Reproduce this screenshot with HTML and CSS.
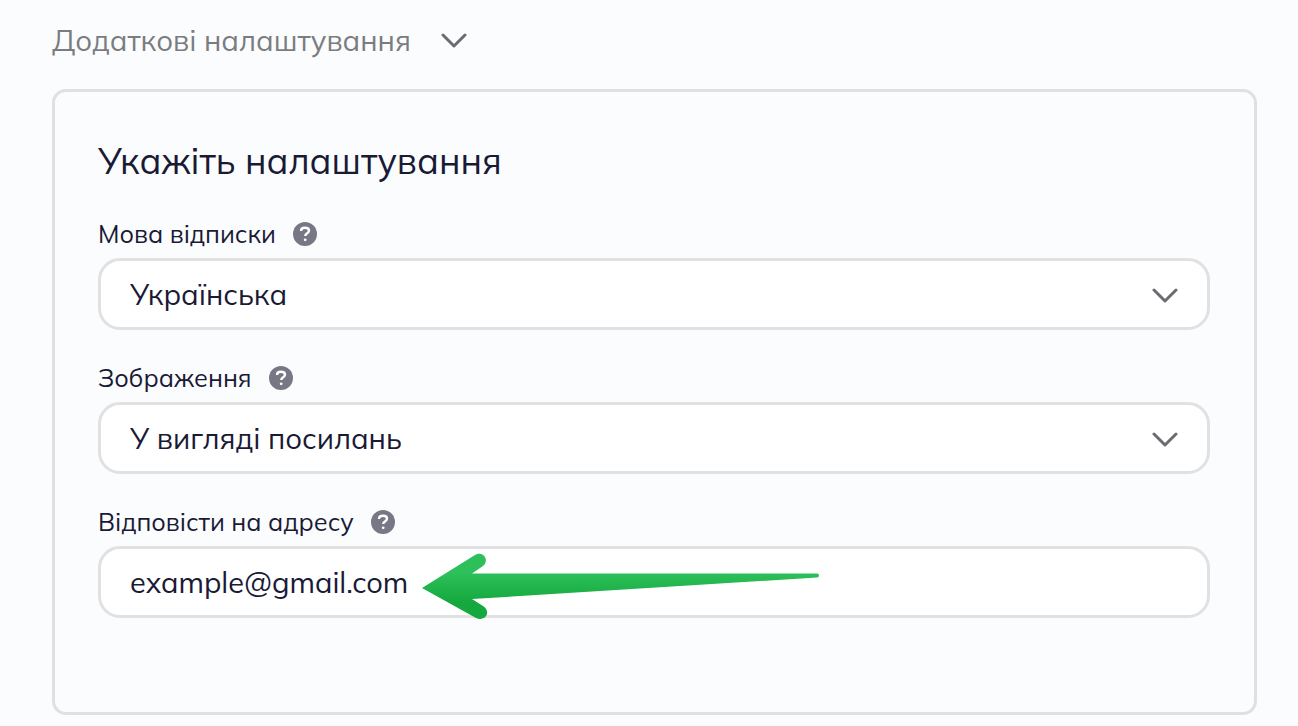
FILE: index.html
```html
<!DOCTYPE html>
<html lang="uk">
<head>
    <meta charset="UTF-8">
    <meta name="viewport" content="width=device-width, initial-scale=1">
    <title>Додаткові налаштування</title>
    <link rel="stylesheet" href="styles.css">
</head>
<body>

    <button type="button" class="toggle" aria-expanded="true" aria-controls="settings">
        Додаткові налаштування
        <svg class="chevron" viewBox="0 0 26 16" aria-hidden="true"><path d="M2 3l11 11L24 3"/></svg>
    </button>

    <form class="card" id="settings">
        <h2>Укажіть налаштування</h2>

        <div class="field">
            <div class="label-row">
                <label for="language">Мова відписки</label>
                <svg class="help" viewBox="0 0 24 24" aria-hidden="true"><circle cx="12" cy="12" r="12"/><path d="M8 9c0-2 1.700-3.200 4-3.200s4 1.200 4 3c0 2.400-3.800 2.500-3.800 5.200"/><circle class="dot" cx="12.200" cy="17.800" r="1.400"/></svg>
            </div>
            <div class="control">
                <select id="language" name="language">
                    <option>Українська</option>
                </select>
                <svg class="chevron" viewBox="0 0 26 16" aria-hidden="true"><path d="M2 3l11 11L24 3"/></svg>
            </div>
        </div>

        <div class="field">
            <div class="label-row">
                <label for="images">Зображення</label>
                <svg class="help" viewBox="0 0 24 24" aria-hidden="true"><circle cx="12" cy="12" r="12"/><path d="M8 9c0-2 1.700-3.200 4-3.200s4 1.200 4 3c0 2.400-3.800 2.500-3.800 5.200"/><circle class="dot" cx="12.200" cy="17.800" r="1.400"/></svg>
            </div>
            <div class="control">
                <select id="images" name="images">
                    <option>У вигляді посилань</option>
                </select>
                <svg class="chevron" viewBox="0 0 26 16" aria-hidden="true"><path d="M2 3l11 11L24 3"/></svg>
            </div>
        </div>

        <div class="field">
            <div class="label-row">
                <label for="reply-to">Відповісти на адресу</label>
                <svg class="help" viewBox="0 0 24 24" aria-hidden="true"><circle cx="12" cy="12" r="12"/><path d="M8 9c0-2 1.700-3.200 4-3.200s4 1.200 4 3c0 2.400-3.800 2.500-3.800 5.200"/><circle class="dot" cx="12.200" cy="17.800" r="1.400"/></svg>
            </div>
            <div class="control">
                <input type="email" id="reply-to" name="reply-to" value="example@gmail.com">
                <svg class="arrow" viewBox="0 0 398 68" aria-hidden="true">
                    <defs>
                        <linearGradient id="arrow-fill" x1="0" y1="0" x2="0" y2="1">
                            <stop offset="0.3" stop-color="#2dc05a"/>
                            <stop offset="0.75" stop-color="#14a83e"/>
                        </linearGradient>
                    </defs>
                    <path fill="url(#arrow-fill)" d="M0 35L53 2C61-3 68 7 61 13L50 20.500H395Q397 20.500 397 22.500T395 24.500L50 46L61 53C70 59 63 69 54 65Z"/>
                </svg>
            </div>
        </div>
    </form>

</body>
</html>
```
FILE: styles.css
```css
* { box-sizing: border-box; }
body { margin: 0; padding: 0 41px 11px 52px; background-color: #fbfcfe; color: #1a1a35; font-family: Mulish, Lato, "Open Sans", sans-serif; }
.toggle { display: flex; align-items: center; gap: 30px; height: 80px; margin-bottom: 9px; padding: 0; border: none; background: none; color: #7b7c80; font: inherit; font-size: 29px; cursor: pointer; }
.chevron { width: 26px; height: 16px; fill: none; stroke: #6b6c70; stroke-width: 3; stroke-linecap: round; stroke-linejoin: round; }
.card { display: flex; flex-direction: column; gap: 24px; padding: 44px 44px 94px 43px; border: 3px solid #dfe0e4; border-radius: 14px; }
h2 { margin: 0; font-size: 36px; font-weight: 400; line-height: 50px; }
.label-row { display: flex; align-items: center; gap: 17px; height: 48px; font-size: 25px; }
.label-row label { padding-bottom: 2px; }
.help { width: 24px; height: 24px; fill: #777786; }
.help path { fill: none; stroke: #fff; stroke-width: 2.4; }
.help .dot { fill: #fff; }
.control { position: relative; }
input, select { display: block; width: 100%; height: 72px; padding: 0 29px; border: 3px solid #e0e1e3; border-radius: 22px; background-color: #fff; color: inherit; font: inherit; font-size: 29px; appearance: none; outline: none; }
.control .chevron { position: absolute; right: 32px; top: 29px; pointer-events: none; }
.arrow { position: absolute; left: 324px; top: 7px; width: 398px; height: 68px; pointer-events: none; }
```
